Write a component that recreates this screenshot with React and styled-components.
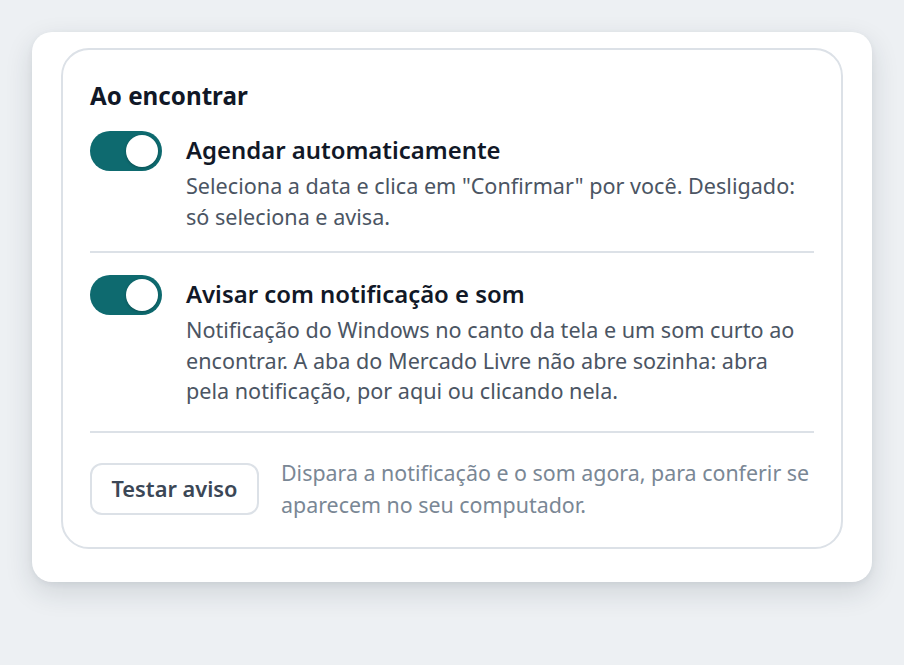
import React, { useState } from "react"
import styled, { createGlobalStyle } from "styled-components"

const GlobalStyle = createGlobalStyle`
  html, body {
    margin: 0;
    padding: 0;
    background: #edf0f3;
    font-family: "Noto Sans", "Open Sans", sans-serif;
  }
`

const Page = styled.div`
  padding: 32px;
  min-height: 665px;
  box-sizing: border-box;
`

const Panel = styled.div`
  width: 840px;
  box-sizing: border-box;
  background: #fff;
  border-radius: 20px;
  padding: 16px 29px 33px;
  box-shadow: 0 10px 28px rgba(30, 45, 60, 0.14), 0 2px 6px rgba(30, 45, 60, 0.06);
`

const Section = styled.section`
  border: 2px solid #dce1e7;
  border-radius: 28px;
  padding: 30px 27px 26px;
`

const Heading = styled.h2`
  margin: 0 0 19px;
  font-size: 24.2px;
  line-height: 32px;
  font-weight: 700;
  color: #111827;
`

const Item = styled.div`
  display: flex;
  gap: 24px;
  padding: ${({ $first }) => ($first ? "0 0 19px" : "22px 0 24px")};
  border-bottom: 2px solid #dce1e7;
`

const Switch = styled.button`
  flex: none;
  position: relative;
  width: 72px;
  height: 40px;
  border: none;
  border-radius: 20px;
  padding: 0;
  cursor: pointer;
  background: ${({ $on }) => ($on ? "#0e6a6f" : "#c9d0d8")};

  &::after {
    content: "";
    position: absolute;
    top: 4px;
    left: ${({ $on }) => ($on ? "36px" : "4px")};
    width: 32px;
    height: 32px;
    border-radius: 50%;
    background: #fff;
    box-shadow: 0 1px 3px rgba(0, 0, 0, 0.25);
  }
`

const Texts = styled.div`
  flex: 1;
  padding-top: 4px;
`

const Title = styled.div`
  font-size: 23.9px;
  line-height: 30px;
  font-weight: 600;
  color: #111827;
  margin-bottom: 6px;
`

const Desc = styled.p`
  margin: 0;
  font-size: 21.6px;
  line-height: 30.6px;
  color: #4b5563;
`

const Footer = styled.div`
  display: flex;
  align-items: center;
  gap: 22px;
  padding-top: 24px;
`

const TestButton = styled.button`
  flex: none;
  width: 169px;
  height: 52px;
  border: 2px solid #dce1e7;
  border-radius: 12px;
  background: #fff;
  font-family: inherit;
  font-size: 21.8px;
  font-weight: 600;
  color: #3b4756;
  cursor: pointer;
`

const Hint = styled.p`
  margin: 0;
  font-size: 21.4px;
  line-height: 32px;
  color: #7a8795;
`

export default function App() {
  const [auto, setAuto] = useState(true)
  const [notify, setNotify] = useState(true)

  return (
    <Page>
      <GlobalStyle />
      <Panel>
        <Section>
          <Heading>Ao encontrar</Heading>

          <Item $first>
            <Switch $on={auto} onClick={() => setAuto(!auto)} aria-label="Agendar automaticamente" />
            <Texts>
              <Title>Agendar automaticamente</Title>
              <Desc>
                Seleciona a data e clica em "Confirmar" por você. Desligado: só seleciona e avisa.
              </Desc>
            </Texts>
          </Item>

          <Item>
            <Switch $on={notify} onClick={() => setNotify(!notify)} aria-label="Avisar com notificação e som" />
            <Texts>
              <Title>Avisar com notificação e som</Title>
              <Desc>
                Notificação do Windows no canto da tela e um som curto ao encontrar. A aba do Mercado Livre não
                abre sozinha: abra pela notificação, por aqui ou clicando nela.
              </Desc>
            </Texts>
          </Item>

          <Footer>
            <TestButton>Testar aviso</TestButton>
            <Hint>Dispara a notificação e o som agora, para conferir se aparecem no seu computador.</Hint>
          </Footer>
        </Section>
      </Panel>
    </Page>
  )
}
